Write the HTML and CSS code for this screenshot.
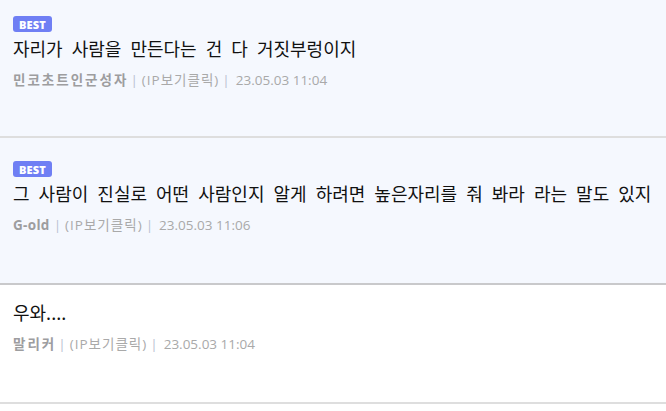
FILE: index.html
```html
<!DOCTYPE html>
<html lang="ko">
<head>
<meta charset="utf-8">
<link rel="stylesheet" href="styles.css">
</head>
<body>
<ul class="comments">
  <li class="comment comment--best">
    <div class="badge-row"><span class="badge">BEST</span></div>
    <p class="title">자리가 사람을 만든다는 건 다 거짓부렁이지</p>
    <div class="meta"><span class="name">민코초트인군성자</span><span class="sep">|</span><span class="ip">(IP보기클릭)</span><span class="sep">|</span><span class="date">23.05.03 11:04</span></div>
  </li>
  <li class="comment comment--best comment--dark">
    <div class="badge-row"><span class="badge">BEST</span></div>
    <p class="title">그 사람이 진실로 어떤 사람인지 알게 하려면 높은자리를 줘 봐라 라는 말도 있지</p>
    <div class="meta"><span class="name name--latin">G-old</span><span class="sep">|</span><span class="ip">(IP보기클릭)</span><span class="sep">|</span><span class="date">23.05.03 11:06</span></div>
  </li>
  <li class="comment">
    <p class="title">우와....</p>
    <div class="meta"><span class="name">말리커</span><span class="sep">|</span><span class="ip">(IP보기클릭)</span><span class="sep">|</span><span class="date">23.05.03 11:04</span></div>
  </li>
</ul>
</body>
</html>
```
FILE: styles.css
```css
* { box-sizing: border-box; }
html, body { margin: 0; padding: 0; background: #fff; }
body {
  font-family: "Open Sans", "Noto Sans CJK KR", sans-serif;
  overflow: hidden;
}
.comments {
  list-style: none;
  margin: -7px 0 0;
  padding: 0;
}
.comment {
  padding: 14px 13px 48px;
  border-bottom: 2px solid #dedede;
  background: #fff;
}
.comment--best { background: #f5f8fe; }
.comment:first-child { padding-bottom: 46px; }
.comment--dark { border-bottom-color: #c9c9cb; }
.badge-row {
  display: flex;
  margin-top: 9px;
  margin-bottom: 3px;
}
.badge {
  display: flex;
  align-items: center;
  justify-content: center;
  width: 39px;
  height: 16px;
  border-radius: 3px;
  background: #6f7ff4;
  color: #fff;
  font-family: "Open Sans", sans-serif;
  font-weight: 800;
  font-size: 11px;
  letter-spacing: 0.2px;
}
.title {
  margin: 0;
  font-family: "Noto Sans CJK KR", sans-serif;
  font-size: 18px;
  line-height: 26px;
  word-spacing: 4px;
  color: #111;
}
.meta {
  margin-top: 9px;
  display: flex;
  gap: 4px;
  font-size: 13.5px;
  line-height: 20px;
  color: #a7a7a7;
}
.name { font-weight: 700; color: #9d9d9f; letter-spacing: 2px; margin-right: -2px; }
.name--latin { letter-spacing: 0.3px; margin-right: 0; }
.sep { color: #b8c0d0; }
.ip { color: #a9a9a9; letter-spacing: 1px; margin-right: -1px; }
.date { color: #a9a9a9; margin-left: 2px; }
```
